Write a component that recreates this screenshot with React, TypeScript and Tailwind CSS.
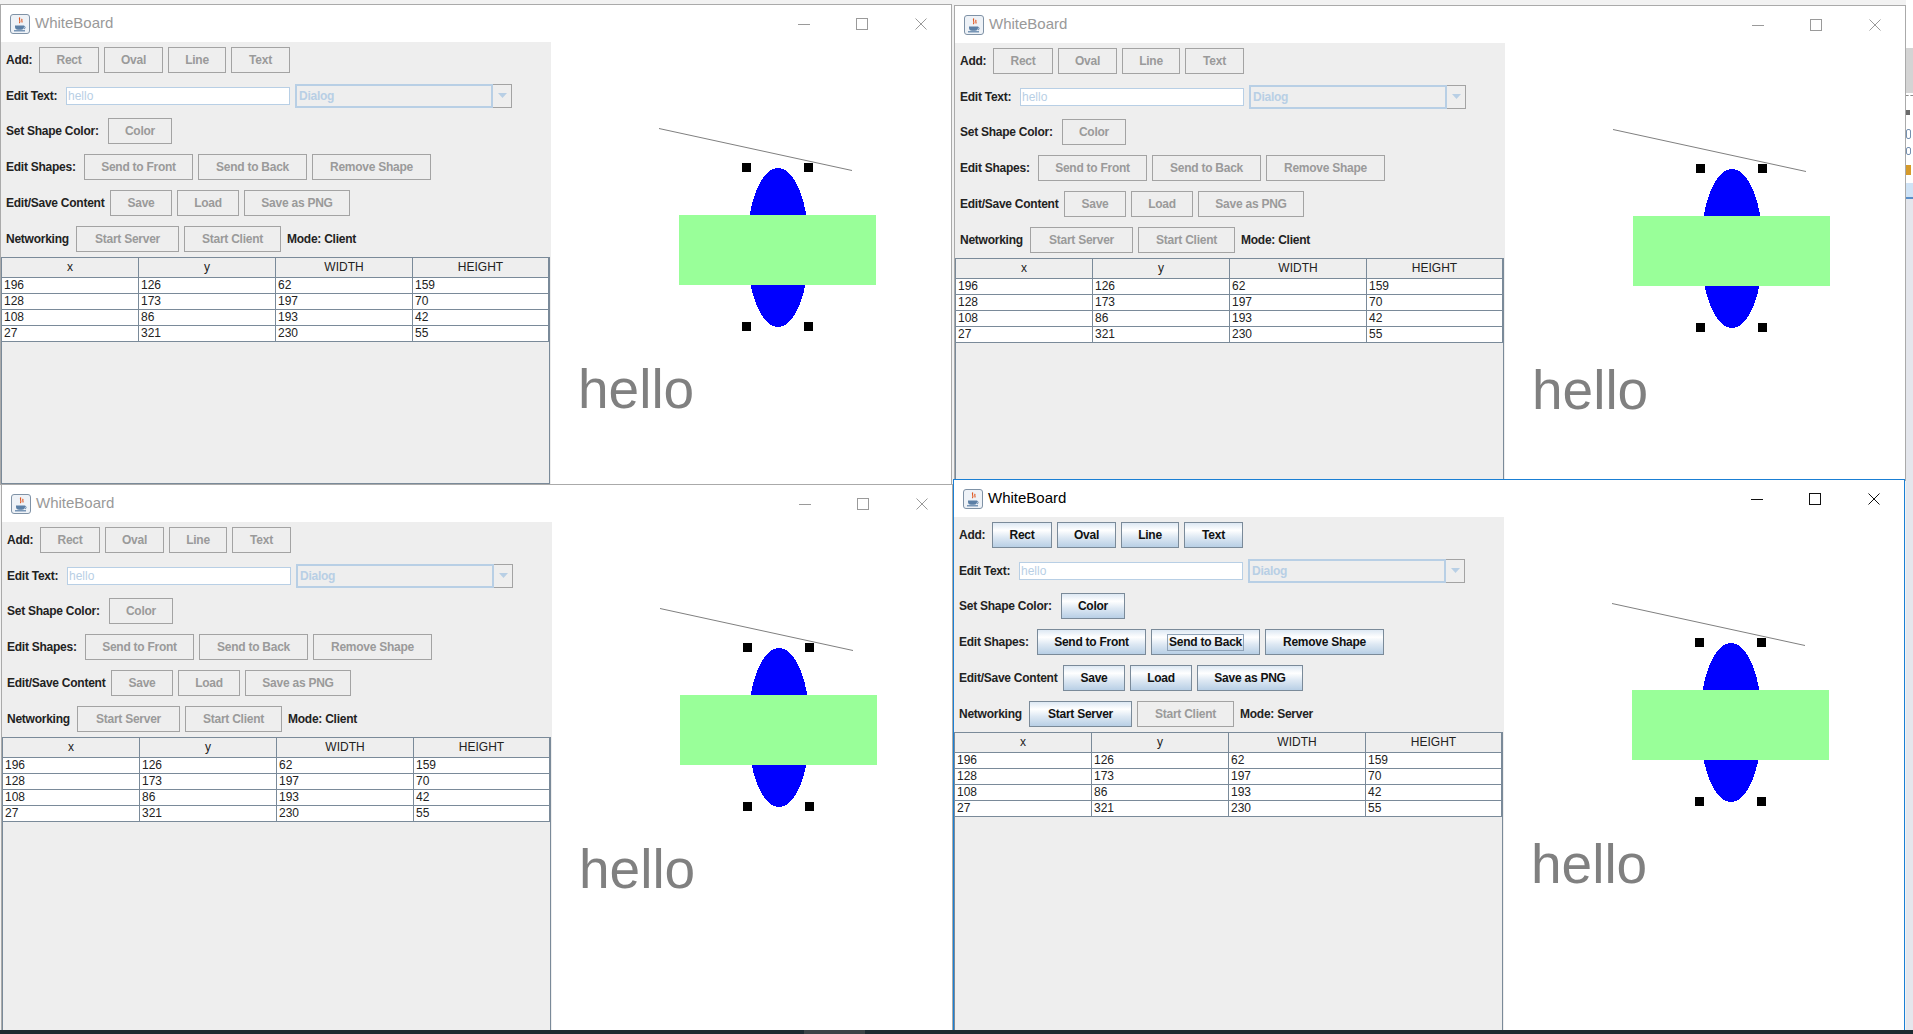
import React from "react";

const DATA = [
  [196, 126, 62, 159],
  [128, 173, 197, 70],
  [108, 86, 193, 42],
  [27, 321, 230, 55],
];

const BTN_BASE =
  "flex h-[26px] shrink-0 items-center justify-center border text-[12px] font-bold tracking-[-0.25px] whitespace-nowrap";
const BTN_ON =
  "border-[#7a8a99] bg-[linear-gradient(180deg,#dde8f3_0%,#ffffff_30%,#dde8f3_60%,#b8cfe5_100%)] text-[#111111]";
const BTN_OFF = "border-[#a3a3a3] bg-[#eeeeee] text-[#9a9a9a]";
const LABEL =
  "shrink-0 whitespace-nowrap text-[12px] font-bold tracking-[-0.25px] text-[#222222]";

function Btn({
  w,
  label,
  on,
  focused,
}: {
  w: string;
  label: string;
  on: boolean;
  focused?: boolean;
}) {
  return (
    <div className={`${BTN_BASE} ${w} ${on ? BTN_ON : BTN_OFF}`}>
      {focused ? (
        <span className="border border-[#8fa3b8] px-[1px] leading-[15px]">{label}</span>
      ) : (
        label
      )}
    </div>
  );
}

function JavaIcon() {
  return (
    <svg width="20" height="20" viewBox="0 0 20 20" className="shrink-0">
      <rect x="0.5" y="0.5" width="19" height="19" rx="2.5" fill="#eef2f7" stroke="#7f92a6" />
      <path
        d="M5 11.5 h9 v1.2 a3 3 0 0 1 -3 3 h-3 a3 3 0 0 1 -3 -3 z"
        fill="#5b7fa6"
      />
      <path d="M14 12 a1.6 1.6 0 0 1 0 3" fill="none" stroke="#5b7fa6" strokeWidth="1" />
      <path d="M4 16.8 h11" stroke="#5b7fa6" strokeWidth="1.2" />
      <path
        d="M10 3.5 c-2 1.8 1.2 2.8 -0.6 5.6 M12.2 5 c-1.4 1.3 0.6 1.8 -0.4 3.6"
        fill="none"
        stroke="#e0561f"
        strokeWidth="1.1"
      />
    </svg>
  );
}

function Caption({ color }: { color: string }) {
  return (
    <div className="flex items-center">
      <svg width="12" height="12" viewBox="0 0 12 12">
        <line x1="0" y1="6.5" x2="12" y2="6.5" stroke={color} strokeWidth="1" />
      </svg>
      <svg width="12" height="12" viewBox="0 0 12 12" className="ml-[46px]">
        <rect x="0.5" y="0.5" width="11" height="11" fill="none" stroke={color} strokeWidth="1" />
      </svg>
      <svg width="12" height="12" viewBox="0 0 12 12" className="ml-[47px] mr-[24px]">
        <path d="M0.5 0.5 L11.5 11.5 M11.5 0.5 L0.5 11.5" stroke={color} strokeWidth="1" />
      </svg>
    </div>
  );
}

function Canvas() {
  return (
    <svg width="400" height="1000" className="block">
      <ellipse cx="227" cy="205.5" rx="31" ry="79.5" fill="#0000ff" shapeRendering="crispEdges" />
      <rect x="128" y="173" width="197" height="70" fill="#99ff99" />
      <line
        x1="108"
        y1="86.5"
        x2="301"
        y2="128.5"
        stroke="#808080"
        strokeWidth="1"
      />
      <text
        x="27"
        y="366"
        fontFamily="'Liberation Sans', Arial, sans-serif"
        fontSize="55"
        fill="#808080"
      >
        hello
      </text>
      <rect x="191" y="121" width="9" height="9" fill="#000000" />
      <rect x="253" y="121" width="9" height="9" fill="#000000" />
      <rect x="191" y="280" width="9" height="9" fill="#000000" />
      <rect x="253" y="280" width="9" height="9" fill="#000000" />
    </svg>
  );
}

function Table() {
  const cols = "grid grid-cols-[137px_137px_137px_136px]";
  return (
    <div className="w-[549px] flex-1 overflow-hidden border border-[#7a8a99] bg-[#eeeeee]">
      <div className={`${cols} h-[20px]`}>
        {["x", "y", "WIDTH", "HEIGHT"].map((h) => (
          <div
            key={h}
            className="border-b border-r border-[#7a8a99] bg-[#eeeeee] text-center text-[12px] leading-[19px] text-[#222222]"
          >
            {h}
          </div>
        ))}
      </div>
      {DATA.map((row, i) => (
        <div key={i} className={`${cols} h-[16px]`}>
          {row.map((v, j) => (
            <div
              key={j}
              className="border-b border-r border-[#7a8a99] bg-white pl-[2px] text-[12px] leading-[15px] text-[#222222]"
            >
              {v}
            </div>
          ))}
        </div>
      ))}
    </div>
  );
}

function WhiteBoard({ pos, active }: { pos: string; active: boolean }) {
  const on = active;
  return (
    <div
      className={`absolute flex w-[952px] flex-col border bg-white ${pos} ${
        active ? "border-[#1a7fd4]" : "border-[#aaaaaa]"
      }`}
    >
      {/* title bar */}
      <div className="flex h-[37px] shrink-0 items-center bg-white">
        <div className="ml-[9px]">
          <JavaIcon />
        </div>
        <div
          className={`ml-[5px] text-[15px] ${active ? "text-[#000000]" : "text-[#999999]"}`}
        >
          WhiteBoard
        </div>
        <div className="flex-1" />
        <Caption color={active ? "#111111" : "#9a9a9a"} />
      </div>

      {/* content */}
      <div className="flex min-h-0 flex-1">
        <div className="flex w-[550px] shrink-0 flex-col bg-[#eeeeee]">
          <div className="flex h-[36px] shrink-0 items-center gap-[5px] pl-[5px]">
            <div className={`${LABEL} w-[28px]`}>Add:</div>
            <Btn w="w-[60px]" label="Rect" on={on} />
            <Btn w="w-[59px]" label="Oval" on={on} />
            <Btn w="w-[58px]" label="Line" on={on} />
            <Btn w="w-[59px]" label="Text" on={on} />
          </div>
          <div className="flex h-[35px] shrink-0 items-center gap-[5px] pl-[5px]">
            <div className={`${LABEL} w-[55px]`}>Edit Text:</div>
            <div className="h-[18px] w-[224px] shrink-0 border border-[#b8cfe5] bg-white pl-[1px] text-[12px] leading-[16px] text-[#b8cfe5]">
              hello
            </div>
            <div className="flex h-[24px] w-[217px] shrink-0">
              <div className="flex-1 border-2 border-[#b8cfe5] bg-[#eeeeee] pl-[2px] text-[12px] font-bold leading-[20px] tracking-[-0.25px] text-[#b8cfe5]">
                Dialog
              </div>
              <div className="flex w-[19px] items-center justify-center border border-l-0 border-[#a3a3a3] bg-[#eeeeee]">
                <svg width="9" height="5" viewBox="0 0 9 5">
                  <path d="M0 0 H9 L4.5 5 Z" fill="#b8cfe5" />
                </svg>
              </div>
            </div>
          </div>
          <div className="flex h-[36px] shrink-0 items-center gap-[5px] pl-[5px]">
            <div className={`${LABEL} w-[97px]`}>Set Shape Color:</div>
            <Btn w="w-[64px]" label="Color" on={on} />
          </div>
          <div className="flex h-[36px] shrink-0 items-center gap-[5px] pl-[5px]">
            <div className={`${LABEL} w-[73px]`}>Edit Shapes:</div>
            <Btn w="w-[109px]" label="Send to Front" on={on} />
            <Btn w="w-[109px]" label="Send to Back" on={on} focused={active} />
            <Btn w="w-[119px]" label="Remove Shape" on={on} />
          </div>
          <div className="flex h-[36px] shrink-0 items-center gap-[5px] pl-[5px]">
            <div className={`${LABEL} w-[99px]`}>Edit/Save Content</div>
            <Btn w="w-[62px]" label="Save" on={on} />
            <Btn w="w-[62px]" label="Load" on={on} />
            <Btn w="w-[106px]" label="Save as PNG" on={on} />
          </div>
          <div className="flex h-[36px] shrink-0 items-center gap-[5px] pl-[5px]">
            <div className={`${LABEL} w-[65px]`}>Networking</div>
            <Btn w="w-[103px]" label="Start Server" on={on} />
            <Btn w="w-[97px]" label="Start Client" on={false} />
            <div className={`${LABEL} ml-[1px]`}>{active ? "Mode: Server" : "Mode: Client"}</div>
          </div>
          <Table />
        </div>
        <div className="w-[400px] shrink-0 overflow-hidden bg-white">
          <Canvas />
        </div>
      </div>
    </div>
  );
}

export default function App() {
  return (
    <div className="relative h-[1034px] w-[1913px] overflow-hidden bg-[#f2f2f2] font-['Liberation_Sans',Arial,sans-serif]">
      {/* right-edge strip of another window */}
      <div className="absolute left-[1906px] top-0 flex h-[1034px] w-[7px] flex-col bg-white">
        <div className="h-[48px]" />
        <div className="h-[45px] bg-[#d4d4d4]" />
        <div className="mt-[2px] h-[1px] border-t border-dashed border-[#8a8a8a]" />
        <div className="mt-[14px] h-[5px] w-[4px] bg-[#6a6a6a]" />
        <div className="mt-[14px] h-[10px] w-[5px] rounded-[2px] border border-[#7590b0]" />
        <div className="mt-[8px] h-[8px] w-[5px] rounded-[2px] border border-[#7590b0]" />
        <div className="mt-[10px] h-[10px] w-[5px] bg-[#d59a2a]" />
        <div className="mt-[8px] h-[14px] w-[7px] bg-[#cfe3f6]" />
        <div className="h-[2px] bg-[#5a8fc8]" />
        <div className="flex-1 bg-[#e4e6ec]" />
      </div>

      <WhiteBoard pos="left-[0px] top-[4px] h-[481px]" active={false} />
      <WhiteBoard pos="left-[954px] top-[5px] h-[476px]" active={false} />
      <WhiteBoard pos="left-[1px] top-[484px] h-[600px]" active={false} />
      <WhiteBoard pos="left-[953px] top-[479px] h-[600px]" active={true} />

      {/* taskbar edge */}
      <div className="absolute bottom-0 left-0 flex h-[4px] w-[1913px] bg-[#1c2a31]">
        <div className="ml-[804px] w-[61px] bg-[#3c4347]" />
      </div>
    </div>
  );
}
